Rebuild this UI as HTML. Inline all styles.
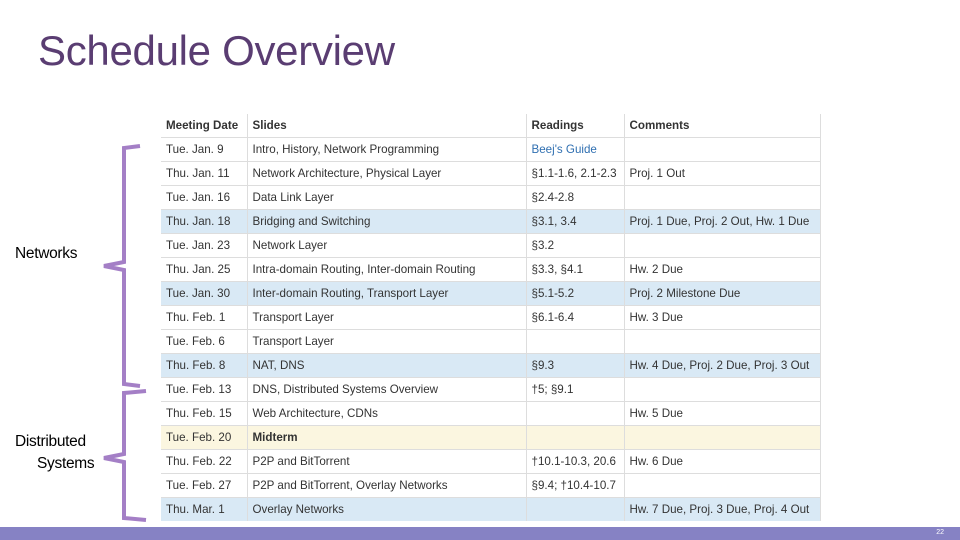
<!DOCTYPE html>
<html><head><style>
body{margin:0;width:960px;height:540px;background:#fff;position:relative;overflow:hidden;font-family:"Liberation Sans",sans-serif}
h1{position:absolute;left:38px;top:27px;margin:0;font-weight:normal;font-size:42px;color:#5a3d72;letter-spacing:-0.3px}
table{position:absolute;left:161px;top:114px;border-collapse:collapse;font-size:11.6px;color:#333;width:660px}
td{height:23px;border-top:1px solid #ddd;border-left:1px solid #ddd;padding:0 0 0 5px;white-space:nowrap;line-height:23px}
td:first-child{border-left:none}
tr td:last-child{border-right:1px solid #ddd}
tr:first-child td{border-top:none;font-weight:bold}
.b td{background:#d9e9f5}
.y td{background:#fbf6e0}
a{color:#2f6fb1;text-decoration:none}
.lab{position:absolute;font-family:"Liberation Sans",sans-serif;font-size:15.5px;color:#000;letter-spacing:-0.3px}
.bar{position:absolute;left:0;top:527px;width:960px;height:13px;background:#8682c4}
</style></head><body>
<h1>Schedule Overview</h1>
<svg style="position:absolute;left:0;top:0" width="960" height="540">
<path d="M140 146 L124 148 L124 262 L104 266 L124 270 L124 384 L140 386" fill="none" stroke="#a47fc6" stroke-width="4"/>
<path d="M146 391 L124 393 L124 454 L104 458 L124 462 L124 518 L146 520" fill="none" stroke="#a47fc6" stroke-width="4"/>
</svg>
<div class="lab" style="left:15px;top:245px">Networks</div>
<div class="lab" style="left:15px;top:433px">Distributed</div>
<div class="lab" style="left:37px;top:455px">Systems</div>
<table>
<colgroup><col style="width:86px"><col style="width:279px"><col style="width:98px"><col></colgroup>
<tr><td>Meeting Date</td><td>Slides</td><td>Readings</td><td>Comments</td></tr>
<tr><td>Tue. Jan. 9</td><td>Intro, History, Network Programming</td><td><a>Beej's Guide</a></td><td></td></tr>
<tr><td>Thu. Jan. 11</td><td>Network Architecture, Physical Layer</td><td>§1.1-1.6, 2.1-2.3</td><td>Proj. 1 Out</td></tr>
<tr><td>Tue. Jan. 16</td><td>Data Link Layer</td><td>§2.4-2.8</td><td></td></tr>
<tr class="b"><td>Thu. Jan. 18</td><td>Bridging and Switching</td><td>§3.1, 3.4</td><td>Proj. 1 Due, Proj. 2 Out, Hw. 1 Due</td></tr>
<tr><td>Tue. Jan. 23</td><td>Network Layer</td><td>§3.2</td><td></td></tr>
<tr><td>Thu. Jan. 25</td><td>Intra-domain Routing, Inter-domain Routing</td><td>§3.3, §4.1</td><td>Hw. 2 Due</td></tr>
<tr class="b"><td>Tue. Jan. 30</td><td>Inter-domain Routing, Transport Layer</td><td>§5.1-5.2</td><td>Proj. 2 Milestone Due</td></tr>
<tr><td>Thu. Feb. 1</td><td>Transport Layer</td><td>§6.1-6.4</td><td>Hw. 3 Due</td></tr>
<tr><td>Tue. Feb. 6</td><td>Transport Layer</td><td></td><td></td></tr>
<tr class="b"><td>Thu. Feb. 8</td><td>NAT, DNS</td><td>§9.3</td><td>Hw. 4 Due, Proj. 2 Due, Proj. 3 Out</td></tr>
<tr><td>Tue. Feb. 13</td><td>DNS, Distributed Systems Overview</td><td>†5; §9.1</td><td></td></tr>
<tr><td>Thu. Feb. 15</td><td>Web Architecture, CDNs</td><td></td><td>Hw. 5 Due</td></tr>
<tr class="y"><td>Tue. Feb. 20</td><td style="font-weight:bold">Midterm</td><td></td><td></td></tr>
<tr><td>Thu. Feb. 22</td><td>P2P and BitTorrent</td><td>†10.1-10.3, 20.6</td><td>Hw. 6 Due</td></tr>
<tr><td>Tue. Feb. 27</td><td>P2P and BitTorrent, Overlay Networks</td><td>§9.4; †10.4-10.7</td><td></td></tr>
<tr class="b"><td>Thu. Mar. 1</td><td>Overlay Networks</td><td></td><td>Hw. 7 Due, Proj. 3 Due, Proj. 4 Out</td></tr>
</table>
<div class="bar"><span style="position:absolute;right:16px;top:2px;font-size:7px;color:#fff">22</span></div>
</body></html>
